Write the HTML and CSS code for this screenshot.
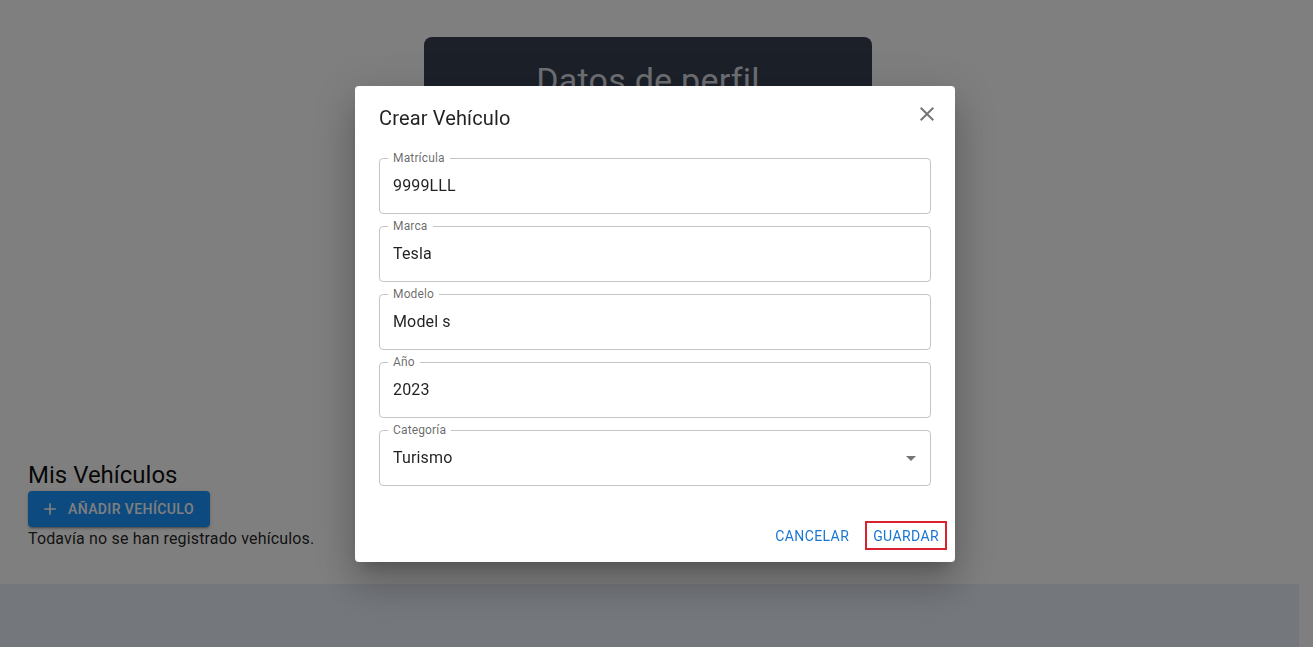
FILE: index.html
```html
<!DOCTYPE html>
<html lang="es">
<head>
<meta charset="utf-8">
<title>Crear Vehículo</title>
<link rel="stylesheet" href="styles.css">
</head>
<body>
<div class="page">
  <main class="main">
    <section class="profile-card">
      <h1 class="profile-title">Datos de perfil</h1>
    </section>
    <section class="vehicles">
      <h2 class="vehicles-title">Mis Vehículos</h2>
      <button class="btn-contained" type="button">
        <svg class="btn-icon" viewBox="0 0 24 24" width="20" height="20" aria-hidden="true"><path d="M19 13h-6v6h-2v-6H5v-2h6V5h2v6h6v2z" fill="currentColor"/></svg>
        <span>Añadir vehículo</span>
      </button>
      <p class="vehicles-empty">Todavía no se han registrado vehículos.</p>
    </section>
  </main>
  <footer class="footer"></footer>
</div>

<div class="backdrop"></div>
<div class="dialog-wrap">
  <div class="dialog" role="dialog" aria-labelledby="dlg-title">
    <h2 class="dialog-title" id="dlg-title">Crear Vehículo</h2>
    <button class="close-btn" type="button" aria-label="Cerrar">
      <svg viewBox="0 0 24 24" width="24" height="24" aria-hidden="true"><path d="M19 6.41 17.59 5 12 10.59 6.41 5 5 6.41 10.59 12 5 17.59 6.41 19 12 13.41 17.59 19 19 17.59 13.41 12z" fill="currentColor"/></svg>
    </button>
    <div class="dialog-content">
      <div class="field">
        <span class="field-label">Matrícula</span>
        <div class="field-value">9999LLL</div>
      </div>
      <div class="field">
        <span class="field-label">Marca</span>
        <div class="field-value">Tesla</div>
      </div>
      <div class="field">
        <span class="field-label">Modelo</span>
        <div class="field-value">Model s</div>
      </div>
      <div class="field">
        <span class="field-label">Año</span>
        <div class="field-value">2023</div>
      </div>
      <div class="field field-select">
        <span class="field-label">Categoría</span>
        <div class="field-value">Turismo</div>
        <svg class="select-arrow" viewBox="0 0 24 24" width="24" height="24" aria-hidden="true"><path d="M7 10l5 5 5-5z" fill="currentColor"/></svg>
      </div>
    </div>
    <div class="dialog-actions">
      <button class="btn-text" type="button">Cancelar</button>
      <button class="btn-text btn-focused" type="button">Guardar</button>
    </div>
  </div>
</div>
</body>
</html>
```

FILE: styles.css
```css
* { box-sizing: border-box; }

html, body {
  margin: 0;
  padding: 0;
  background: #ffffff;
  font-family: Roboto, "Liberation Sans", Arial, sans-serif;
  color: rgba(0, 0, 0, 0.87);
  overflow: hidden;
}

.page {
  width: 1313px;
  height: 647px;
  display: flex;
  flex-direction: column;
}

.main {
  width: 1296px;
  padding: 37px 28px 0;
}

.profile-card {
  width: 448px;
  height: 380px;
  margin: 0 auto;
  background: #384052;
  border-radius: 8px;
  padding-top: 23px;
}

.profile-title {
  margin: 0;
  text-align: center;
  font-size: 34px;
  font-weight: 400;
  line-height: 1.235;
  letter-spacing: 0.25px;
  color: #dcdfe6;
}

.vehicles {
  margin-top: 42px;
}

.vehicles-title {
  margin: 0;
  font-size: 24px;
  font-weight: 400;
  line-height: 32px;
  color: rgba(0, 0, 0, 0.95);
}

.btn-contained {
  display: inline-flex;
  align-items: center;
  height: 36px;
  padding: 6px 16px;
  border: 0;
  border-radius: 4px;
  background: #1a94ff;
  color: #ffffff;
  font-family: inherit;
  font-size: 14px;
  font-weight: 500;
  letter-spacing: 0.4px;
  text-transform: uppercase;
  box-shadow: 0 3px 1px -2px rgba(0,0,0,0.2), 0 2px 2px 0 rgba(0,0,0,0.14), 0 1px 5px 0 rgba(0,0,0,0.12);
}

.btn-icon {
  margin-left: -4px;
  margin-right: 8px;
}

.vehicles-empty {
  margin: 0;
  font-size: 16px;
  line-height: 24px;
  letter-spacing: 0.15px;
}

.footer {
  margin-top: 33px;
  width: 1299px;
  flex: 1;
  background: #e8eef8;
}

.backdrop {
  position: fixed;
  inset: 0;
  background: rgba(0, 0, 0, 0.5);
}

.dialog-wrap {
  position: fixed;
  inset: 0;
  padding-right: 3px;
  display: flex;
  align-items: center;
  justify-content: center;
}

.dialog {
  position: relative;
  width: 600px;
  background: #ffffff;
  border-radius: 4px;
  box-shadow: 0 11px 15px -7px rgba(0,0,0,0.2), 0 24px 38px 3px rgba(0,0,0,0.14), 0 9px 46px 8px rgba(0,0,0,0.12);
}

.dialog-title {
  margin: 0;
  padding: 16px 24px;
  font-size: 20px;
  font-weight: 400;
  line-height: 32px;
  letter-spacing: 0.15px;
  color: rgba(0, 0, 0, 0.87);
}

.close-btn {
  position: absolute;
  top: 8px;
  right: 8px;
  width: 40px;
  height: 40px;
  padding: 8px;
  border: 0;
  background: transparent;
  color: rgba(0, 0, 0, 0.54);
  display: flex;
  align-items: center;
  justify-content: center;
}

.dialog-content {
  padding: 8px 24px 24px;
  display: flex;
  flex-direction: column;
  gap: 12px;
}

.field {
  position: relative;
  height: 56px;
  border: 1px solid rgba(0, 0, 0, 0.23);
  border-radius: 4px;
  display: flex;
  align-items: center;
  padding: 0 13px;
}

.field-label {
  position: absolute;
  top: -8px;
  left: 8px;
  padding: 0 5px;
  background: #ffffff;
  font-size: 12px;
  line-height: 14px;
  letter-spacing: 0.15px;
  color: rgba(0, 0, 0, 0.6);
}

.field-value {
  font-size: 16px;
  line-height: 23px;
  letter-spacing: 0.15px;
  color: rgba(0, 0, 0, 0.87);
}

.select-arrow {
  position: absolute;
  right: 7px;
  top: 15px;
  color: rgba(0, 0, 0, 0.54);
}

.dialog-actions {
  padding: 8px;
  display: flex;
  align-items: center;
  justify-content: flex-end;
  gap: 8px;
}

.btn-text {
  height: 36px;
  min-width: 64px;
  padding: 6px 8px;
  border: 0;
  border-radius: 4px;
  background: transparent;
  color: #1976d2;
  font-family: inherit;
  font-size: 14px;
  font-weight: 400;
  letter-spacing: 0.4px;
  text-transform: uppercase;
}

.btn-focused {
  height: 29px;
  padding: 0 6px;
  border: 2px solid #d8222e;
  border-radius: 0;
}
```
